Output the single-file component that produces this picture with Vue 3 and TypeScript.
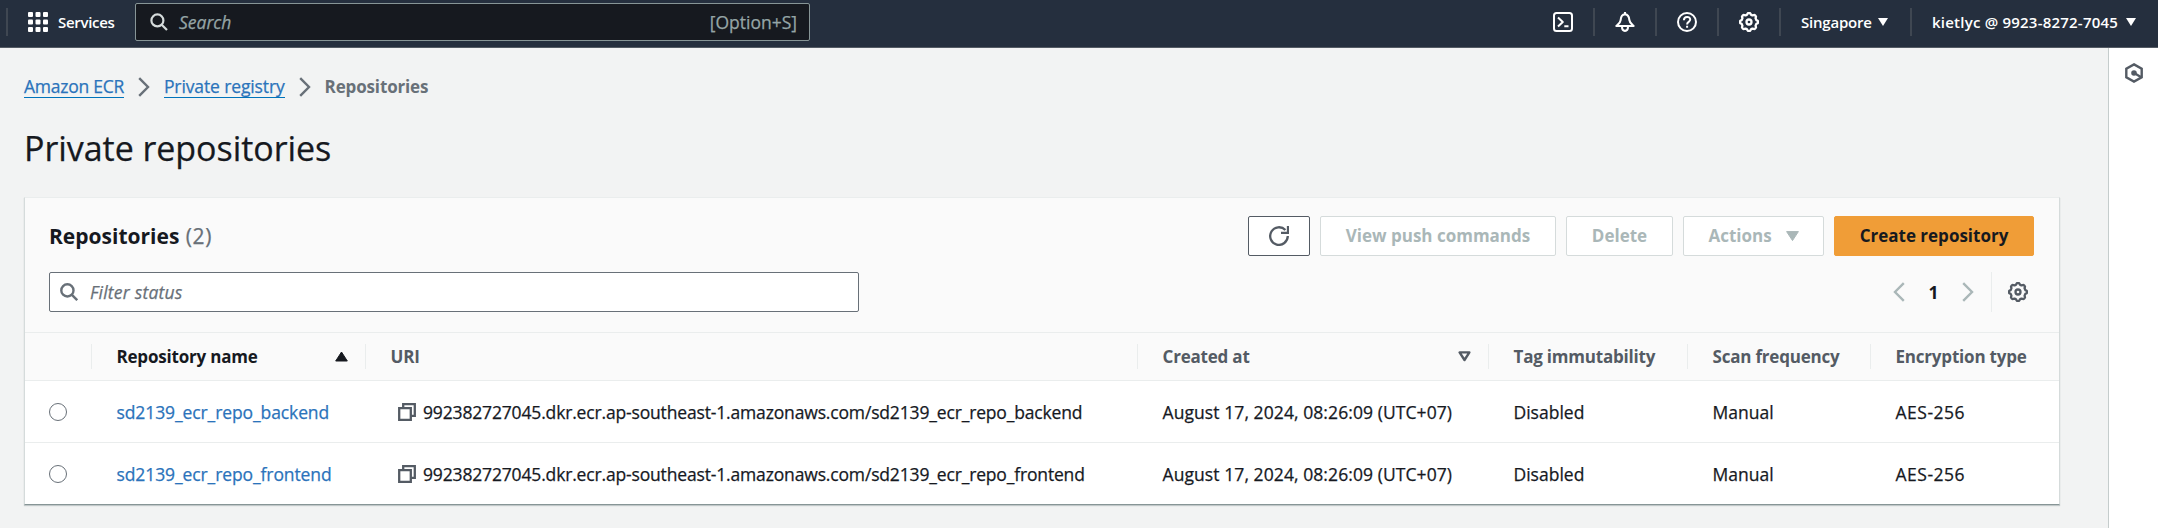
<script setup lang="ts">
interface Repository {
  name: string
  created: string
  immutability: string
  scan: string
  encryption: string
}

const registry = '992382727045.dkr.ecr.ap-southeast-1.amazonaws.com'
const repositories: Repository[] = ['backend', 'frontend'].map((kind) => ({
  name: `sd2139_ecr_repo_${kind}`,
  created: 'August 17, 2024, 08:26:09 (UTC+07)',
  immutability: 'Disabled',
  scan: 'Manual',
  encryption: 'AES-256',
}))

function gearPath(): string {
  const points: string[] = []
  for (let i = 0; i < 96; i++) {
    const angle = (i / 96) * Math.PI * 2
    const radius = 8.2 + 0.75 * Math.tanh(2.2 * Math.cos(angle * 8))
    points.push(`${(10 + radius * Math.sin(angle)).toFixed(2)} ${(10 - radius * Math.cos(angle)).toFixed(2)}`)
  }
  return `M${points.join('L')}Z`
}
const gear = gearPath()
</script>

<template>
  <div class="console">
    <header class="nav">
      <span class="rule first"></span>
      <svg class="grid-icon" width="20" height="20" viewBox="0 0 20 20" fill="#fff">
        <template v-for="y in 3" :key="y">
          <rect v-for="x in 3" :key="x" :x="(x - 1) * 7.5" :y="(y - 1) * 7.5" width="5" height="5" rx="1" />
        </template>
      </svg>
      <span class="services">Services</span>
      <div class="search">
        <svg width="18" height="18" viewBox="0 0 18 18" fill="none" stroke="#d5dbdb" stroke-width="2.2">
          <circle cx="7.4" cy="7.4" r="6" /><path d="M11.7 11.7 17 17" />
        </svg>
        <span class="search-label">Search</span>
        <span class="shortcut">[Option+S]</span>
      </div>
      <div class="tools">
        <span class="tool">
          <svg width="20" height="20" viewBox="0 0 20 20" fill="none" stroke="#fff" stroke-width="2" stroke-linejoin="round">
            <rect x="1" y="1" width="18" height="18" rx="2.5" /><path d="M5 5.5 9.8 10 5 14.5M11.3 14.2h4.2" />
          </svg>
        </span>
        <span class="rule"></span>
        <span class="tool">
          <svg width="20" height="20" viewBox="0 0 20 20" fill="none" stroke="#fff" stroke-width="2.1" stroke-linejoin="round">
            <path d="M10 2.3C6.7 2.6 5.8 5.2 5.6 8.2 5.4 10.6 3.8 11.6 1.4 14h17.2c-2.4-2.4-4-3.4-4.2-5.8C14.2 5.2 13.3 2.6 10 2.3ZM10 0v2.5M7 14.5c0 5.8 6 5.8 6 0" />
          </svg>
        </span>
        <span class="rule"></span>
        <span class="tool">
          <svg width="20" height="20" viewBox="0 0 20 20" fill="none" stroke="#fff" stroke-width="2">
            <circle cx="10" cy="10" r="9" /><path d="M6.9 8.2C6.9 3.9 13.2 4 13.2 7.6c0 2.4-3.1 2.2-3.1 4.8M10.1 13.8v2" />
          </svg>
        </span>
        <span class="rule"></span>
        <span class="tool">
          <svg width="20" height="20" viewBox="0 0 20 20" fill="none" stroke="#fff" stroke-width="2.3">
            <path :d="gear" /><circle cx="10" cy="10" r="2.5" />
          </svg>
        </span>
        <span class="rule"></span>
        <span class="menu region">Singapore<svg width="10" height="8" viewBox="0 0 10 8"><path d="M0 0h10L5 8Z" fill="#fff" /></svg></span>
        <span class="rule"></span>
        <span class="menu account">kietlyc @ 9923-8272-7045<svg width="10" height="8" viewBox="0 0 10 8"><path d="M0 0h10L5 8Z" fill="#fff" /></svg></span>
      </div>
    </header>

    <div class="body">
      <main class="content">
        <nav class="crumbs">
          <a>Amazon ECR</a>
          <svg width="12" height="20" viewBox="0 0 12 20" fill="none" stroke="#687078" stroke-width="2.4"><path d="M1.2 1.2 10 10l-8.8 8.8" /></svg>
          <a class="registry">Private registry</a>
          <svg width="12" height="20" viewBox="0 0 12 20" fill="none" stroke="#687078" stroke-width="2.4"><path d="M1.2 1.2 10 10l-8.8 8.8" /></svg>
          <strong>Repositories</strong>
        </nav>
        <h1>Private repositories</h1>

        <section class="card">
          <div class="toolbar">
            <h2>Repositories <span>(2)</span></h2>
            <div class="buttons">
              <button class="btn refresh">
                <svg width="20" height="20" viewBox="0 0 20 20" fill="none" stroke="#545b64" stroke-width="2.3">
                  <path d="M18.8 10A8.8 8.8 0 1 1 16.4 4M19 0v6.8h-7" />
                </svg>
              </button>
              <button class="btn push">View push commands</button>
              <button class="btn delete">Delete</button>
              <button class="btn actions">Actions<svg width="13" height="10" viewBox="0 0 13 10"><path d="M.6.6h11.8L6.5 9.6Z" fill="#aab7b8" stroke="#aab7b8" stroke-linejoin="round" /></svg></button>
              <button class="btn create">Create repository</button>
            </div>
          </div>
          <div class="filters">
            <div class="filter">
              <svg width="18" height="18" viewBox="0 0 18 18" fill="none" stroke="#687078" stroke-width="2.4">
                <circle cx="7.4" cy="7.4" r="6.1" /><path d="M11.7 11.7 17.2 17.2" />
              </svg>
              <span>Filter status</span>
            </div>
            <div class="pager">
              <svg width="12" height="20" viewBox="0 0 12 20" fill="none" stroke="#aab7b8" stroke-width="2.4"><path d="M10.8 1.2 2 10l8.8 8.8" /></svg>
              <b>1</b>
              <svg width="12" height="20" viewBox="0 0 12 20" fill="none" stroke="#aab7b8" stroke-width="2.4"><path d="M1.2 1.2 10 10l-8.8 8.8" /></svg>
              <span class="settings">
                <svg width="20" height="20" viewBox="0 0 20 20" fill="none" stroke="#545b64" stroke-width="2.3">
                  <path :d="gear" /><circle cx="10" cy="10" r="2.5" />
                </svg>
              </span>
            </div>
          </div>

          <div class="row head">
            <div class="cell"></div>
            <div class="cell sorted"><span>Repository name</span><svg width="13" height="11" viewBox="0 0 13 11"><path d="M6.5 1 12.3 10H.7Z" fill="#16191f" stroke="#16191f" stroke-linejoin="round" /></svg></div>
            <div class="cell">URI</div>
            <div class="cell"><span>Created at</span><svg width="13" height="11" viewBox="0 0 13 11"><path d="M1.6 1.4h9.8L6.5 9Z" fill="none" stroke="#545b64" stroke-width="2.4" stroke-linejoin="round" /></svg></div>
            <div class="cell">Tag immutability</div>
            <div class="cell">Scan frequency</div>
            <div class="cell">Encryption type</div>
          </div>
          <div v-for="repo in repositories" :key="repo.name" class="row">
            <div class="cell"><span class="radio"></span></div>
            <div class="cell link"><a>{{ repo.name }}</a></div>
            <div class="cell uri">
              <svg width="18" height="18" viewBox="0 0 18 18" fill="none" stroke="#545b64" stroke-width="2.3">
                <path d="M1.2 5.2h11.6v11.6H1.2ZM5.2 5V1.2h11.6v11.6h-4" />
              </svg>
              <span>{{ registry }}/{{ repo.name }}</span>
            </div>
            <div class="cell date">{{ repo.created }}</div>
            <div class="cell">{{ repo.immutability }}</div>
            <div class="cell">{{ repo.scan }}</div>
            <div class="cell encryption">{{ repo.encryption }}</div>
          </div>
        </section>
      </main>
      <aside class="panel">
        <svg width="20" height="20" viewBox="0 0 20 20" fill="none" stroke="#545b64" stroke-width="2.4">
          <path d="M10 1.4 17.7 5.7v8.6L10 18.6 2.3 14.3V5.7Z" /><circle cx="10" cy="10" r="1.6" fill="#545b64" /><path d="m10.5 10.3 6.8 4" />
        </svg>
      </aside>
    </div>
  </div>
</template>

<style>
body { background: #f2f3f3; }
</style>

<style scoped>
.console {
  width: 2158px;
  height: 528px;
  overflow: hidden;
  background: #f2f3f3;
  color: #16191f;
  font-family: "Open Sans", "Noto Sans", sans-serif;
  font-size: 17.5px;
  font-weight: 400;
  line-height: 24px;
  font-stretch: 96%;
  -webkit-text-stroke: 0.25px currentColor;
}
.console * { box-sizing: border-box; }
svg { display: block; flex: none; }

.nav {
  display: flex;
  align-items: center;
  height: 48px;
  padding-bottom: 4px;
  border-bottom: 1px solid #545b64;
  background: #252f3e;
  color: #fff;
}
.rule { width: 2px; height: 28px; background: #3f4752; flex: none; }
.rule.first { margin-left: 6px; }
.grid-icon { margin-left: 20px; }
.services { margin-left: 10px; width: 77px; font-size: 15px; font-weight: 600; letter-spacing: -0.3px; -webkit-text-stroke: 0; }
.search {
  display: flex;
  align-items: center;
  width: 675px;
  height: 38px;
  padding: 0 12px 0 14px;
  border: 1px solid #879596;
  border-radius: 2px;
  background: #16191f;
  color: #95a5a6;
}
.search-label { margin-left: 11px; font-style: italic; }
.shortcut { margin-left: auto; }
.tools { display: flex; align-items: center; margin-left: auto; }
.tool { display: grid; place-items: center; width: 60px; }
.menu { display: flex; align-items: center; justify-content: space-between; font-size: 15px; font-weight: 600; white-space: nowrap; -webkit-text-stroke: 0; }
.region { width: 129px; padding: 0 22px 0 20px; letter-spacing: -0.2px; }
.account { width: 246px; padding: 0 22px 0 20px; letter-spacing: 0.22px; }

.body { display: flex; height: 480px; }
.content { width: 2108px; padding: 27px 0 0 24px; }
.crumbs { display: flex; align-items: center; height: 24px; color: #687078; letter-spacing: -0.2px; white-space: nowrap; }
.crumbs a { border-bottom: 1px solid #0073bb; color: #2b73bb; line-height: 21px; letter-spacing: -0.26px; }
.crumbs .registry { letter-spacing: -0.12px; }
.crumbs svg { margin: 0 14px; }
.crumbs strong { font-size: 17px; font-weight: 700; letter-spacing: -0.15px; -webkit-text-stroke: 0; }
h1 { margin: 26px 0 0; font-size: 34px; line-height: 46px; font-weight: 400; letter-spacing: -0.05px; }

.card {
  width: 2036px;
  margin-top: 26px;
  border: 1px solid #d5dbdb;
  border-top-color: #eaeded;
  border-bottom: 1px solid #879596;
  background: #fff;
  box-shadow: 0 1px 1px rgba(0, 28, 36, 0.2);
}
.toolbar { display: flex; justify-content: space-between; height: 74px; padding: 18px 25px 0 24px; background: #fafafa; }
h2 { margin: 0; font-size: 21px; line-height: 40px; font-weight: 700; white-space: nowrap; -webkit-text-stroke: 0; }
h2 span { margin-left: 1px; color: #687078; font-weight: 400; letter-spacing: 0.6px; -webkit-text-stroke: 0.25px currentColor; }
.buttons { display: flex; gap: 10px; }
.btn {
  display: flex;
  align-items: center;
  justify-content: center;
  height: 40px;
  padding: 0;
  border: 1px solid #d5dbdb;
  border-radius: 2px;
  background: #fff;
  color: #aab7b8;
  font: inherit;
  font-size: 17px;
  font-weight: 700;
  letter-spacing: 0;
  white-space: nowrap;
  -webkit-text-stroke: 0;
}
.refresh { width: 62px; border-color: #545b64; }
.push { width: 236px; }
.delete { width: 107px; }
.actions { width: 141px; gap: 14px; }
.create { width: 200px; border-color: #f09d37; background: #f09d37; color: #16191f; }

.filters { display: flex; justify-content: space-between; height: 60px; padding: 0 24px; background: #fafafa; }
.filter {
  display: flex;
  align-items: center;
  gap: 12px;
  width: 810px;
  height: 40px;
  padding-left: 10px;
  border: 1px solid #687078;
  border-radius: 2px;
  background: #fff;
  color: #687078;
  font-style: italic;
  letter-spacing: 0.22px;
}
.pager { display: flex; align-items: center; height: 40px; }
.pager b { width: 57px; text-align: center; -webkit-text-stroke: 0; }
.settings { display: grid; place-items: center; width: 53px; height: 40px; margin: 0 -9px 0 17px; border-left: 1px solid #eaeded; }

.row {
  display: grid;
  grid-template-columns: 67px 274px 772px 351px 199px 183px 1fr;
  height: 62px;
  align-items: center;
  border-top: 1px solid #eaeded;
}
.head { height: 48px; background: #fafafa; color: #545b64; font-size: 17px; font-weight: 700; letter-spacing: -0.2px; -webkit-text-stroke: 0; }
.cell { display: flex; align-items: center; padding-left: 24.5px; white-space: nowrap; }
.cell:first-child { padding-left: 24px; }
.head .cell { height: 25px; border-right: 1px solid #eaeded; }
.head .cell:last-child { border-right: 0; }
.head .cell svg { margin: 0 17px 0 auto; }
.sorted { color: #16191f; }
.link { color: #2b73bb; letter-spacing: -0.1px; }
.radio { width: 18px; height: 18px; border: 1px solid #687078; border-radius: 50%; background: #fff; }
.uri { gap: 7px; padding-left: 32px; letter-spacing: -0.16px; }
.date { letter-spacing: 0.08px; }
.encryption { letter-spacing: 0.5px; }

.panel { display: flex; justify-content: center; width: 50px; padding-top: 15px; border-left: 1px solid #c5cccc; background: #fff; }
</style>
